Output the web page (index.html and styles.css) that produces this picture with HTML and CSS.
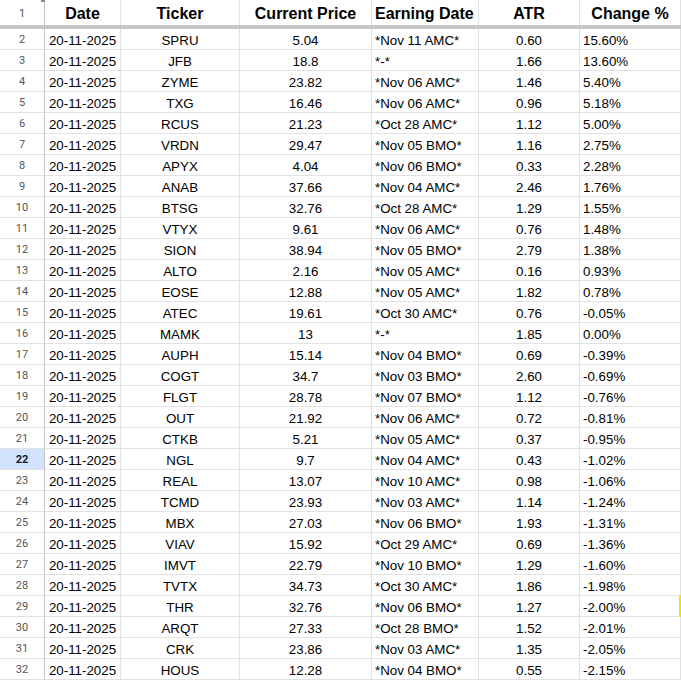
FILE: index.html
```
<!DOCTYPE html>
<html>
<head>
<meta charset="utf-8">
<link rel="stylesheet" href="styles.css">
</head>
<body>
<div class="sheet">
  <div class="row head">
    <div class="rh"><span class="corner"></span>1</div>
    <div class="c">Date</div><div class="c">Ticker</div><div class="c">Current Price</div><div class="c l">Earning Date</div><div class="c">ATR</div><div class="c">Change %</div>
  </div>
  <div class="freeze"></div>
  <div class="row"><div class="rh">2</div><div class="c">20-11-2025</div><div class="c">SPRU</div><div class="c">5.04</div><div class="c l">*Nov 11 AMC*</div><div class="c">0.60</div><div class="c l">15.60%</div></div>
  <div class="row"><div class="rh">3</div><div class="c">20-11-2025</div><div class="c">JFB</div><div class="c">18.8</div><div class="c l">*-*</div><div class="c">1.66</div><div class="c l">13.60%</div></div>
  <div class="row"><div class="rh">4</div><div class="c">20-11-2025</div><div class="c">ZYME</div><div class="c">23.82</div><div class="c l">*Nov 06 AMC*</div><div class="c">1.46</div><div class="c l">5.40%</div></div>
  <div class="row"><div class="rh">5</div><div class="c">20-11-2025</div><div class="c">TXG</div><div class="c">16.46</div><div class="c l">*Nov 06 AMC*</div><div class="c">0.96</div><div class="c l">5.18%</div></div>
  <div class="row"><div class="rh">6</div><div class="c">20-11-2025</div><div class="c">RCUS</div><div class="c">21.23</div><div class="c l">*Oct 28 AMC*</div><div class="c">1.12</div><div class="c l">5.00%</div></div>
  <div class="row"><div class="rh">7</div><div class="c">20-11-2025</div><div class="c">VRDN</div><div class="c">29.47</div><div class="c l">*Nov 05 BMO*</div><div class="c">1.16</div><div class="c l">2.75%</div></div>
  <div class="row"><div class="rh">8</div><div class="c">20-11-2025</div><div class="c">APYX</div><div class="c">4.04</div><div class="c l">*Nov 06 BMO*</div><div class="c">0.33</div><div class="c l">2.28%</div></div>
  <div class="row"><div class="rh">9</div><div class="c">20-11-2025</div><div class="c">ANAB</div><div class="c">37.66</div><div class="c l">*Nov 04 AMC*</div><div class="c">2.46</div><div class="c l">1.76%</div></div>
  <div class="row"><div class="rh">10</div><div class="c">20-11-2025</div><div class="c">BTSG</div><div class="c">32.76</div><div class="c l">*Oct 28 AMC*</div><div class="c">1.29</div><div class="c l">1.55%</div></div>
  <div class="row"><div class="rh">11</div><div class="c">20-11-2025</div><div class="c">VTYX</div><div class="c">9.61</div><div class="c l">*Nov 06 AMC*</div><div class="c">0.76</div><div class="c l">1.48%</div></div>
  <div class="row"><div class="rh">12</div><div class="c">20-11-2025</div><div class="c">SION</div><div class="c">38.94</div><div class="c l">*Nov 05 BMO*</div><div class="c">2.79</div><div class="c l">1.38%</div></div>
  <div class="row"><div class="rh">13</div><div class="c">20-11-2025</div><div class="c">ALTO</div><div class="c">2.16</div><div class="c l">*Nov 05 AMC*</div><div class="c">0.16</div><div class="c l">0.93%</div></div>
  <div class="row"><div class="rh">14</div><div class="c">20-11-2025</div><div class="c">EOSE</div><div class="c">12.88</div><div class="c l">*Nov 05 AMC*</div><div class="c">1.82</div><div class="c l">0.78%</div></div>
  <div class="row"><div class="rh">15</div><div class="c">20-11-2025</div><div class="c">ATEC</div><div class="c">19.61</div><div class="c l">*Oct 30 AMC*</div><div class="c">0.76</div><div class="c l">-0.05%</div></div>
  <div class="row"><div class="rh">16</div><div class="c">20-11-2025</div><div class="c">MAMK</div><div class="c">13</div><div class="c l">*-*</div><div class="c">1.85</div><div class="c l">0.00%</div></div>
  <div class="row"><div class="rh">17</div><div class="c">20-11-2025</div><div class="c">AUPH</div><div class="c">15.14</div><div class="c l">*Nov 04 BMO*</div><div class="c">0.69</div><div class="c l">-0.39%</div></div>
  <div class="row"><div class="rh">18</div><div class="c">20-11-2025</div><div class="c">COGT</div><div class="c">34.7</div><div class="c l">*Nov 03 BMO*</div><div class="c">2.60</div><div class="c l">-0.69%</div></div>
  <div class="row"><div class="rh">19</div><div class="c">20-11-2025</div><div class="c">FLGT</div><div class="c">28.78</div><div class="c l">*Nov 07 BMO*</div><div class="c">1.12</div><div class="c l">-0.76%</div></div>
  <div class="row"><div class="rh">20</div><div class="c">20-11-2025</div><div class="c">OUT</div><div class="c">21.92</div><div class="c l">*Nov 06 AMC*</div><div class="c">0.72</div><div class="c l">-0.81%</div></div>
  <div class="row"><div class="rh">21</div><div class="c">20-11-2025</div><div class="c">CTKB</div><div class="c">5.21</div><div class="c l">*Nov 05 AMC*</div><div class="c">0.37</div><div class="c l">-0.95%</div></div>
  <div class="row"><div class="rh sel">22</div><div class="c">20-11-2025</div><div class="c">NGL</div><div class="c">9.7</div><div class="c l">*Nov 04 AMC*</div><div class="c">0.43</div><div class="c l">-1.02%</div></div>
  <div class="row"><div class="rh">23</div><div class="c">20-11-2025</div><div class="c">REAL</div><div class="c">13.07</div><div class="c l">*Nov 10 AMC*</div><div class="c">0.98</div><div class="c l">-1.06%</div></div>
  <div class="row"><div class="rh">24</div><div class="c">20-11-2025</div><div class="c">TCMD</div><div class="c">23.93</div><div class="c l">*Nov 03 AMC*</div><div class="c">1.14</div><div class="c l">-1.24%</div></div>
  <div class="row"><div class="rh">25</div><div class="c">20-11-2025</div><div class="c">MBX</div><div class="c">27.03</div><div class="c l">*Nov 06 BMO*</div><div class="c">1.93</div><div class="c l">-1.31%</div></div>
  <div class="row"><div class="rh">26</div><div class="c">20-11-2025</div><div class="c">VIAV</div><div class="c">15.92</div><div class="c l">*Oct 29 AMC*</div><div class="c">0.69</div><div class="c l">-1.36%</div></div>
  <div class="row"><div class="rh">27</div><div class="c">20-11-2025</div><div class="c">IMVT</div><div class="c">22.79</div><div class="c l">*Nov 10 BMO*</div><div class="c">1.29</div><div class="c l">-1.60%</div></div>
  <div class="row"><div class="rh">28</div><div class="c">20-11-2025</div><div class="c">TVTX</div><div class="c">34.73</div><div class="c l">*Oct 30 AMC*</div><div class="c">1.86</div><div class="c l">-1.98%</div></div>
  <div class="row"><div class="rh">29</div><div class="c">20-11-2025</div><div class="c">THR</div><div class="c">32.76</div><div class="c l">*Nov 06 BMO*</div><div class="c">1.27</div><div class="c l cursor">-2.00%</div></div>
  <div class="row"><div class="rh">30</div><div class="c">20-11-2025</div><div class="c">ARQT</div><div class="c">27.33</div><div class="c l">*Oct 28 BMO*</div><div class="c">1.52</div><div class="c l">-2.01%</div></div>
  <div class="row"><div class="rh">31</div><div class="c">20-11-2025</div><div class="c">CRK</div><div class="c">23.86</div><div class="c l">*Nov 03 AMC*</div><div class="c">1.35</div><div class="c l">-2.05%</div></div>
  <div class="row"><div class="rh">32</div><div class="c">20-11-2025</div><div class="c">HOUS</div><div class="c">12.28</div><div class="c l">*Nov 04 BMO*</div><div class="c">0.55</div><div class="c l">-2.15%</div></div>
</div>
</body>
</html>
```
FILE: styles.css
```
html, body {
  margin: 0;
  padding: 0;
  background: #ffffff;
  overflow: hidden;
}
.sheet {
  width: 681px;
  font-family: "Liberation Sans", Arial, sans-serif;
  font-size: 13.33px;
  color: #000000;
}
.row {
  display: grid;
  grid-template-columns: 45px 76px 119px 132px 107px 101px 101px;
  height: 21px;
}
.row .c {
  box-sizing: border-box;
  border-right: 1px solid #e2e2e2;
  border-bottom: 1px solid #e2e2e2;
  display: flex;
  align-items: flex-end;
  justify-content: center;
  padding: 0 3px 1px 3px;
  line-height: 15px;
  white-space: nowrap;
  overflow: hidden;
  position: relative;
}
.row .c.l {
  justify-content: flex-start;
}
.row .c.cursor {
  overflow: visible;
}
.rh {
  box-sizing: border-box;
  border-right: 1px solid #c4c4c4;
  border-bottom: 1px solid #e2e2e2;
  display: flex;
  align-items: center;
  justify-content: center;
  padding-top: 1px;
  font-family: Roboto, "Liberation Sans", Arial, sans-serif;
  font-size: 11px;
  color: #555555;
  position: relative;
}
.rh.sel {
  background: #d3e3fd;
  color: #0b1a33;
  font-weight: bold;
}
.head {
  height: 25px;
}
.head .c {
  border-bottom: none;
  font-weight: bold;
  font-size: 16px;
  align-items: center;
  padding-top: 2px;
  padding-bottom: 0;
  line-height: 18px;
}
.head .rh {
  border-bottom: none;
  padding-top: 2px;
}
.corner {
  position: absolute;
  top: 0;
  right: -1px;
  width: 4px;
  height: 2px;
  background: #8a8a8a;
}
.freeze {
  height: 4px;
  background: #c6c6c6;
}
.cursor::after {
  content: "";
  position: absolute;
  top: -1px;
  bottom: -1px;
  right: -1px;
  width: 2px;
  background: #f2e100;
}
```
